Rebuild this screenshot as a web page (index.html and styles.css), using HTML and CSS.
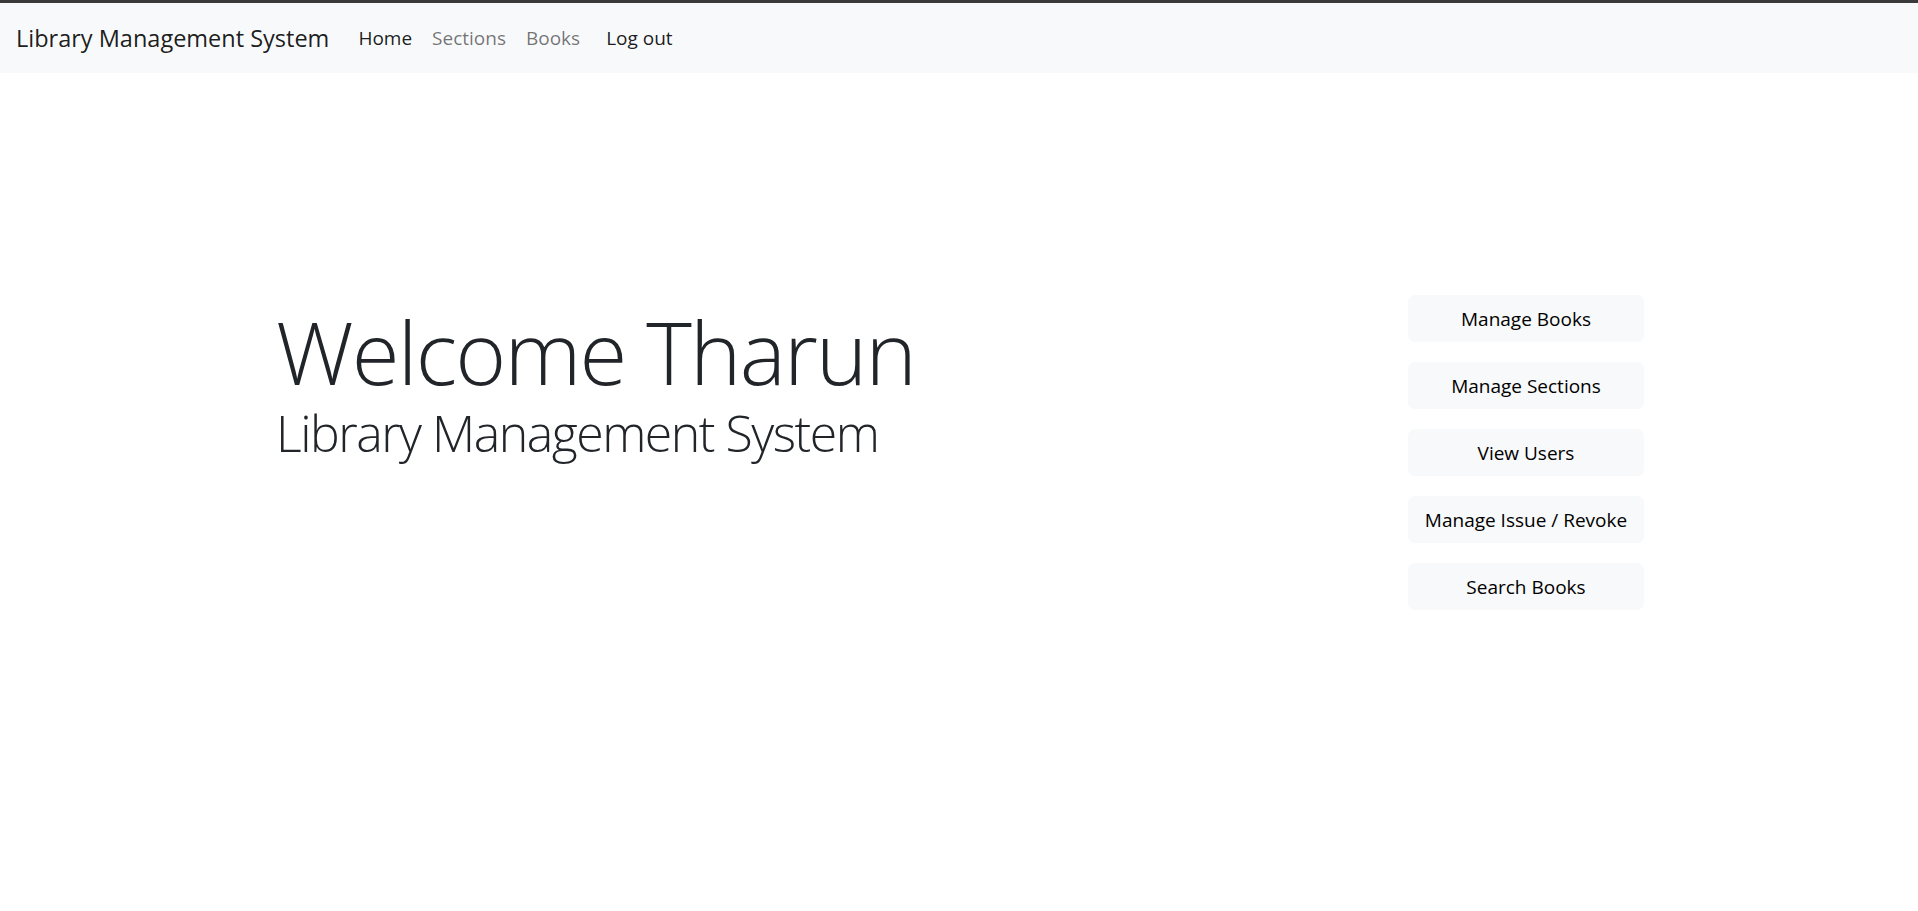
FILE: index.html
```html
<!DOCTYPE html>
<html lang="en">
<head>
<meta charset="utf-8">
<title>Library Management System</title>
<link rel="stylesheet" href="styles.css">
</head>
<body>
<nav class="navbar">
  <a class="brand" href="#">Library Management System</a>
  <ul class="nav-links">
    <li><a class="nav-link active" href="#">Home</a></li>
    <li><a class="nav-link" href="#">Sections</a></li>
    <li><a class="nav-link" href="#">Books</a></li>
    <li class="logout"><a class="nav-link active" href="#">Log out</a></li>
  </ul>
</nav>
<main class="main">
  <section class="hero">
    <h1 class="hero-title">Welcome Tharun</h1>
    <p class="hero-sub">Library Management System</p>
  </section>
  <aside class="actions">
    <a class="btn" href="#">Manage Books</a>
    <a class="btn" href="#">Manage Sections</a>
    <a class="btn" href="#">View Users</a>
    <a class="btn" href="#">Manage Issue / Revoke</a>
    <a class="btn" href="#">Search Books</a>
  </aside>
</main>
</body>
</html>
```

FILE: styles.css
```css
* { box-sizing: border-box; }

html, body {
  margin: 0;
  padding: 0;
  background: #ffffff;
  font-family: "Open Sans", "Noto Sans", "Liberation Sans", sans-serif;
  color: #212529;
}

a { text-decoration: none; }

.navbar {
  display: flex;
  align-items: center;
  height: 73px;
  border-top: 3px solid #3a3a3a;
  background: #f8f9fa;
  padding: 0 16px;
}

.brand {
  font-size: 23.5px;
  color: rgba(0, 0, 0, 0.9);
  margin-right: 19px;
  padding: 5px 0;
}

.nav-links {
  display: flex;
  list-style: none;
  margin: 0;
  padding: 0;
}

.nav-link {
  display: block;
  padding: 8px 10px;
  font-size: 19px;
  color: rgba(0, 0, 0, 0.55);
}

.nav-link.active { color: rgba(0, 0, 0, 0.9); }

.logout { margin-left: 6px; }

.main {
  display: flex;
  justify-content: space-between;
  align-items: flex-start;
  padding: 222px 274px 0 276px;
}

.hero { padding-top: 4px; }

.hero-title {
  margin: 0;
  font-size: 87px;
  font-weight: 300;
  line-height: 1.2;
  letter-spacing: -1.8px;
  color: #212529;
}

.hero-sub {
  margin: 0;
  font-size: 50px;
  font-weight: 300;
  line-height: 1.2;
  letter-spacing: -1.5px;
  color: #212529;
}

.actions {
  display: flex;
  flex-direction: column;
  gap: 20px;
  width: 236px;
}

.btn {
  display: flex;
  align-items: center;
  justify-content: center;
  height: 47px;
  padding-top: 1px;
  background: #f8f9fa;
  border-radius: 7px;
  font-size: 19px;
  color: #000000;
}
```
